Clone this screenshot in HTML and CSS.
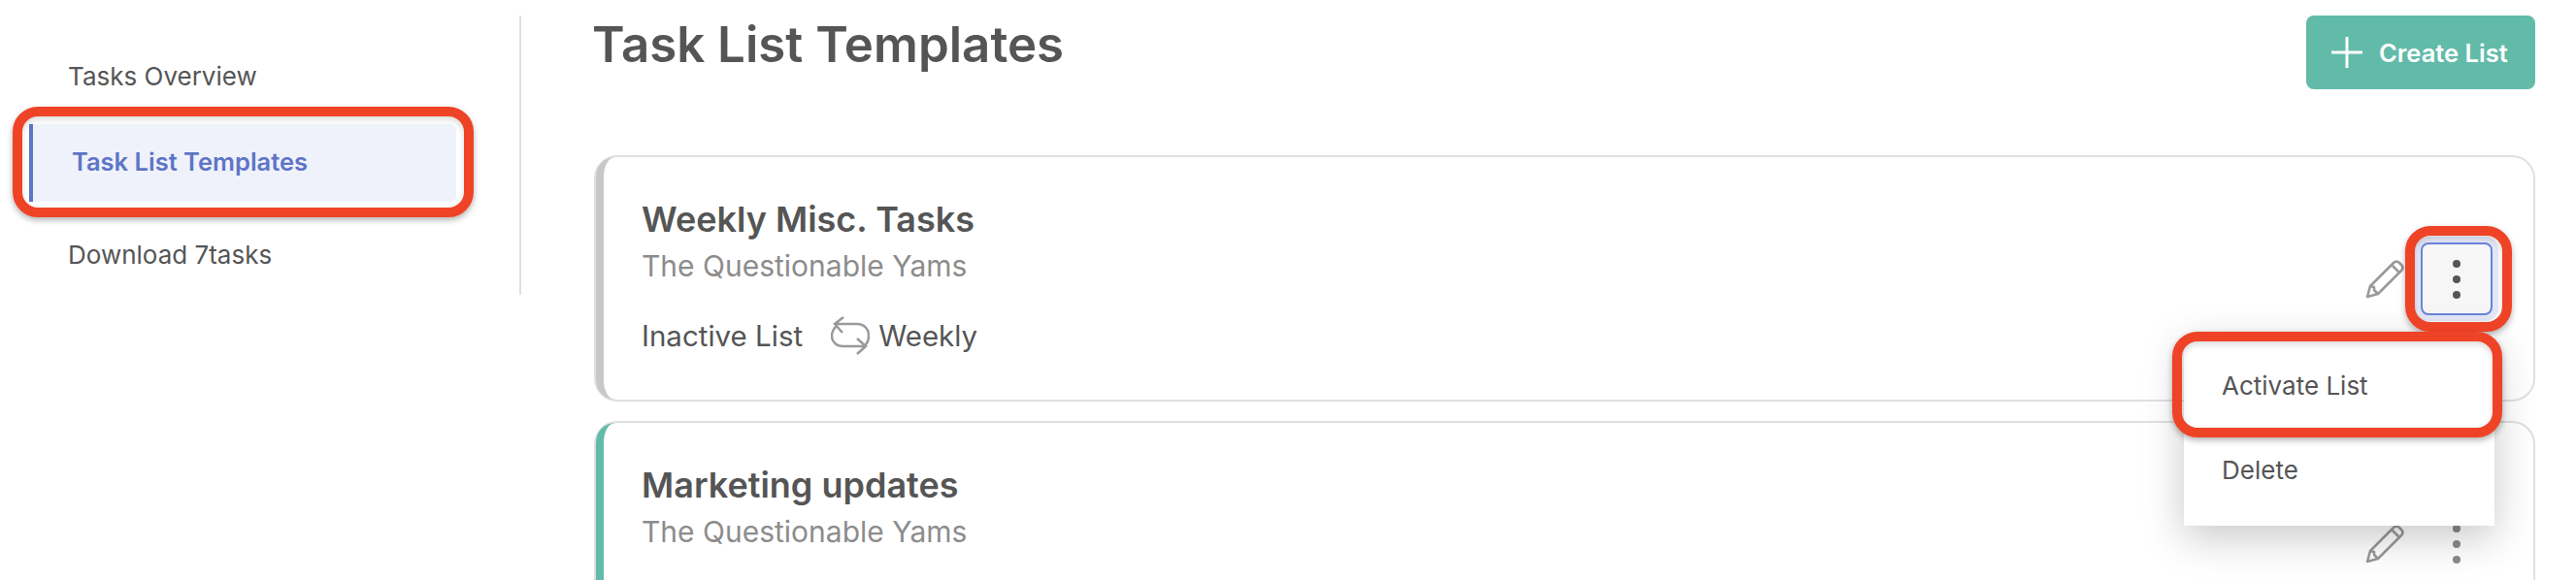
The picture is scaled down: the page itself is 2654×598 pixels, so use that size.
FILE: index.html
```html
<!DOCTYPE html>
<html lang="en">
<head>
<meta charset="utf-8">
<title>Task List Templates</title>
<link rel="stylesheet" href="styles.css">
</head>
<body>
<div class="page">
  <aside class="sidebar">
    <nav class="nav">
      <a class="nav-item nav-first">Tasks Overview</a>
      <a class="nav-item nav-active">Task List Templates</a>
      <a class="nav-item nav-last">Download 7tasks</a>
    </nav>
    <span class="mark mark-nav"></span>
  </aside>
  <main class="main">
    <header class="head">
      <h1 class="title">Task List Templates</h1>
      <button class="create">
        <svg class="plus" viewBox="0 0 32 32"><path d="M16 0v32M0 16h32"/></svg>
        <span>Create List</span>
      </button>
    </header>
    <section class="card card-grey">
      <div class="card-inner">
        <h2 class="card-title">Weekly Misc. Tasks</h2>
        <p class="card-sub">The Questionable Yams</p>
        <div class="meta">
          <span>Inactive List</span>
          <svg class="repeat" viewBox="0 0 40 40"><path d="M13 1 4 8l8 9M4 8h23c7 0 12 5 12 12 0 5-2 9-5 11M27 23l9 8-9 8M36 31H13C6 31 1 27 1 20c0-4 2-7 4-9"/></svg>
          <span>Weekly</span>
        </div>
        <div class="actions">
          <svg class="pencil" viewBox="0 0 40 40"><path d="M2 38 5 27 29 3c2-2 4-2 6 0l2 2c2 2 2 4 0 6L13 35ZM27 5l8 8M5 27l4 1 0 3 4 4"/></svg>
          <button class="kebab kebab-open"><i></i><i></i><i></i></button>
        </div>
      </div>
    </section>
    <section class="card card-teal">
      <div class="card-inner">
        <h2 class="card-title">Marketing updates</h2>
        <p class="card-sub">The Questionable Yams</p>
        <div class="actions actions-second">
          <svg class="pencil" viewBox="0 0 40 40"><path d="M2 38 5 27 29 3c2-2 4-2 6 0l2 2c2 2 2 4 0 6L13 35ZM27 5l8 8M5 27l4 1 0 3 4 4"/></svg>
          <button class="kebab"><i></i><i></i><i></i></button>
        </div>
      </div>
    </section>
    <div class="menu">
      <a class="menu-item">Activate List</a>
      <a class="menu-item">Delete</a>
    </div>
    <span class="mark mark-kebab"></span>
    <span class="mark mark-menu"></span>
  </main>
</div>
</body>
</html>
```
FILE: styles.css
```css
* { box-sizing: border-box; }
html, body { margin: 0; height: 598px; overflow: hidden; background: #fff; }
body { font-family: Inter, "Liberation Sans", sans-serif; color: #555; }
.page { display: flex; align-items: flex-start; height: 598px; padding-top: 16px; position: relative; overflow: hidden; }

.sidebar { width: 537px; height: 288px; border-right: 2px solid #e0e0e0; padding: 22px 0 0 30px; flex: none; }
.nav { display: flex; flex-direction: column; width: 440px; }
.nav-item { height: 80px; display: flex; align-items: center; font-size: 26px; color: #555; padding-left: 40px; }
.nav-first { margin-bottom: 10px; }
.nav-last { margin-top: 14px; }
.nav-active { background: #eff2fa; color: #5e75c6; font-size: 25.5px; font-weight: 600; border-left: 4px solid #5e75c6; padding: 0 0 3px 40px; border-radius: 0 6px 6px 0; }

.main { flex: 1; padding: 0 42px 0 75px; min-width: 0; }
.head { display: flex; justify-content: space-between; align-items: flex-start; height: 76px; margin-bottom: 68px; }
.title { margin: 0 0 0 -2px; font-size: 51px; line-height: 44px; font-weight: 600; color: #555; padding-top: 8px; }
.create { width: 236px; height: 76px; background: #62bba9; border: 0; border-radius: 8px; color: #fff; font: 600 25.5px Inter, sans-serif; display: flex; align-items: center; padding: 0 0 0 26px; gap: 17px; }
.plus { width: 32px; height: 32px; fill: none; stroke: #fff; stroke-width: 3; }

.card { border: 2px solid #e0e0e0; border-radius: 24px; background: #fff; margin-bottom: 20px; height: 254px; }
.card-inner { height: 100%; border-left: 8px solid #c8c8c8; border-radius: 20px; padding: 42px 0 0 39px; position: relative; }
.card-teal { height: 300px; }
.card-teal .card-inner { border-left-color: #62bba9; }
.card-title { margin: 0; font-size: 36px; line-height: 44px; font-weight: 600; color: #555; }
.card-sub { margin: 7px 0 0; font-size: 30px; line-height: 38px; color: #8c8c8c; }
.meta { display: flex; align-items: center; margin-top: 33px; font-size: 29.5px; line-height: 40px; color: #555; }
.repeat { width: 40px; height: 40px; margin: 0 9px 0 29px; fill: none; stroke: #999; stroke-width: 2.5; }

.actions { position: absolute; right: 42px; top: 88px; display: flex; align-items: center; gap: 17px; }
.actions-second { top: 87px; }
.pencil { width: 40px; height: 40px; fill: none; stroke: #999; stroke-width: 2.6; stroke-linejoin: round; }
.kebab { width: 74px; height: 75px; background: transparent; border: 2px solid transparent; border-radius: 8px; display: flex; flex-direction: column; align-items: center; justify-content: center; gap: 8px; padding: 0; }
.kebab i { width: 8px; height: 8px; border-radius: 50%; background: #8a8a8a; }
.kebab-open { background: #f6f6f6; border-color: #6a83da; box-shadow: 0 0 0 6px #e3e7f6; }
.kebab-open i { background: #555; }

.menu { position: absolute; left: 2250px; top: 345px; width: 320px; height: 197px; background: #fff; box-shadow: 0 12px 40px rgba(0,0,0,.22); padding-top: 9px; }
.menu-item { display: flex; align-items: center; height: 87px; padding-left: 39px; font-size: 26px; color: #555; }

.mark { position: absolute; border: 10px solid #ee4326; border-radius: 26px; box-shadow: 0 3px 6px rgba(0,0,0,.3), inset 0 3px 6px rgba(0,0,0,.15); pointer-events: none; }
.mark-nav { left: 13px; top: 110px; width: 475px; height: 114px; }
.mark-kebab { left: 2478px; top: 233px; width: 110px; height: 109px; }
.mark-menu { left: 2238px; top: 342px; width: 340px; height: 109px; }
```
